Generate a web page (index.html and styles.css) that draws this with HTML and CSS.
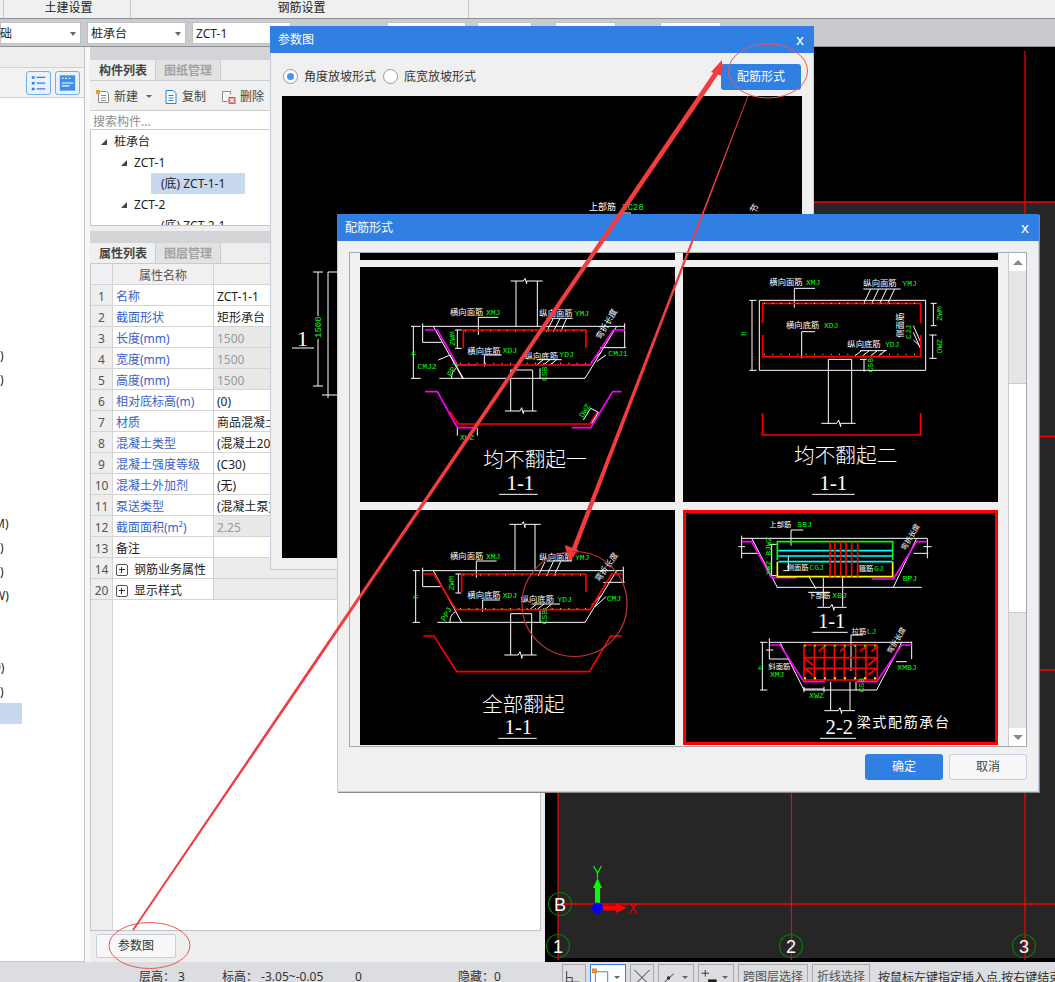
FILE: index.html
```html
<!DOCTYPE html>
<html lang="zh">
<head>
<meta charset="utf-8">
<title>参数图</title>
<link rel="stylesheet" href="styles.css">
</head>
<body>
<div class="app">
  <header class="menubar">
    <div class="menu-gap"></div>
    <div class="menu-item menu-a">土建设置</div>
    <div class="menu-item menu-b">钢筋设置</div>
  </header>
  <div class="selectbar">
    <div class="field f81"><span class="cut">基础</span><i class="caret"></i></div>
    <div class="field f99"><span>桩承台</span><i class="caret"></i></div>
    <div class="field f99"><span>ZCT-1</span></div>
    <div class="field f79 after96"></div>
    <div class="field f55"></div>
    <div class="field f61"></div>
    <div class="field f61"></div>
  </div>
  <main class="workspace">
    <aside class="left">
      <div class="left-head"></div>
      <div class="left-tools">
        <span class="viewbtn">
          <svg viewBox="0 0 24 24" width="24" height="24"><g class="ic-blue"><rect x="5" y="5" width="3" height="2.5"/><rect x="5" y="11" width="3" height="2.5"/><rect x="5" y="17" width="3" height="2.5"/><path d="M10 6.200h9M10 12.200h9M10 18.200h9"/></g></svg>
        </span>
        <span class="viewbtn">
          <svg viewBox="0 0 24 24" width="24" height="24"><rect x="4" y="4" width="16" height="16" class="ic-fill"/><path class="ic-white" d="M6 7h2M9.500 7h2M13 7h2M6 12h12M6 15h8"/></svg>
        </span>
      </div>
      <div class="left-list">
        <div class="lrow"></div><div class="lrow"></div><div class="lrow"></div><div class="lrow"></div><div class="lrow"></div>
        <div class="lrow"></div><div class="lrow"></div><div class="lrow"></div><div class="lrow"></div><div class="lrow"></div>
        <div class="lrow">)</div><div class="lrow">)</div>
        <div class="lrow"></div><div class="lrow"></div><div class="lrow"></div><div class="lrow"></div><div class="lrow"></div>
        <div class="lrow cutm">M)</div><div class="lrow">)</div><div class="lrow">)</div><div class="lrow cutm">W)</div>
        <div class="lrow"></div><div class="lrow"></div>
        <div class="lrow">9)</div><div class="lrow">)</div>
        <div class="lrow lsel"></div>
      </div>
    </aside>
    <div class="split-a"></div>
    <section class="panel">
      <div class="panel-cap"></div>
      <div class="tabs">
        <div class="tab on">构件列表</div>
        <div class="tab">图纸管理</div>
      </div>
      <div class="tools">
        <span class="tool">
          <svg viewBox="0 0 16 16" width="16" height="16"><path class="ic-doc" d="M3.500 2.500h8l2 2v9h-10z M6 6.500h5M6 9h5M6 11.500h5"/><rect x="1" y="1" width="4" height="4" class="ic-star"/></svg>
          新建<i class="caret small"></i>
        </span>
        <span class="tool">
          <svg viewBox="0 0 16 16" width="16" height="16"><path class="ic-copy" d="M3 1.500h7l3 3v10h-10z M5.500 6.500h5M5.500 9h5M5.500 11.500h5"/></svg>
          复制
        </span>
        <span class="tool tool-del">
          <svg viewBox="0 0 16 16" width="16" height="16"><path class="ic-doc" d="M1.500 2.500h8v3M1.500 2.500v10h5"/><rect x="7.500" y="8" width="7" height="7" class="ic-del"/><path class="ic-white" d="M9 9.500l4 4M13 9.500l-4 4"/></svg>
          删除
        </span>
      </div>
      <div class="search">搜索构件...</div>
      <div class="tree">
        <div class="node"><i class="tri"></i>桩承台</div>
        <div class="node lv1"><i class="tri"></i>ZCT-1</div>
        <div class="node lv2 sel">(底) ZCT-1-1</div>
        <div class="node lv1"><i class="tri"></i>ZCT-2</div>
        <div class="node lv2">(底) ZCT-2-1</div>
      </div>
      <div class="panel-gap"></div>
      <div class="tabs">
        <div class="tab on">属性列表</div>
        <div class="tab">图层管理</div>
      </div>
      <div class="props">
        <div class="pr head"><span class="no"></span><span class="nm">属性名称</span><span class="val"></span></div>
        <div class="pr"><span class="no">1</span><span class="nm link">名称</span><span class="val">ZCT-1-1</span></div>
        <div class="pr"><span class="no">2</span><span class="nm link">截面形状</span><span class="val">矩形承台</span></div>
        <div class="pr"><span class="no">3</span><span class="nm link">长度(mm)</span><span class="val ro">1500</span></div>
        <div class="pr"><span class="no">4</span><span class="nm link">宽度(mm)</span><span class="val ro">1500</span></div>
        <div class="pr"><span class="no">5</span><span class="nm link">高度(mm)</span><span class="val ro">1500</span></div>
        <div class="pr"><span class="no">6</span><span class="nm link">相对底标高(m)</span><span class="val">(0)</span></div>
        <div class="pr"><span class="no">7</span><span class="nm link">材质</span><span class="val">商品混凝土</span></div>
        <div class="pr"><span class="no">8</span><span class="nm link">混凝土类型</span><span class="val">(混凝土20石)</span></div>
        <div class="pr"><span class="no">9</span><span class="nm link">混凝土强度等级</span><span class="val">(C30)</span></div>
        <div class="pr"><span class="no">10</span><span class="nm link">混凝土外加剂</span><span class="val">(无)</span></div>
        <div class="pr"><span class="no">11</span><span class="nm link">泵送类型</span><span class="val">(混凝土泵)</span></div>
        <div class="pr"><span class="no">12</span><span class="nm link">截面面积(m²)</span><span class="val ro">2.25</span></div>
        <div class="pr"><span class="no">13</span><span class="nm">备注</span><span class="val"></span></div>
        <div class="pr"><span class="no">14</span><span class="nm"><i class="plus"></i>钢筋业务属性</span><span class="val group"></span></div>
        <div class="pr"><span class="no">20</span><span class="nm"><i class="plus"></i>显示样式</span><span class="val group"></span></div>
        <div class="pfill"><span class="no"></span><span class="pblank"></span></div>
      </div>
      <div class="panel-foot"><button class="btn-param">参数图</button></div>
    </section>
    <div class="split-b"></div>
    <div class="canvas">
      <svg class="cad-bg" viewBox="545 47 510 915" width="510" height="915">
        <rect x="558" y="202" width="497" height="756" class="dark"/>
        <g class="gridline">
          <path class="gv" d="M558 202V960M791.500 202V960M1025 51V960"/>
          <path class="gh" d="M558 202H1055M558 436.500H1055M558 670H1055M558 904H1055"/>
        </g>
        <g class="axis-ring">
          <circle cx="560" cy="904" r="11.500"/>
          <circle cx="558" cy="946" r="11.500"/>
          <circle cx="791" cy="946" r="11.500"/>
          <circle cx="1024" cy="946" r="11.500"/>
        </g>
        <text x="560" y="911" class="axis-t">B</text>
        <text x="558" y="953" class="axis-t">1</text>
        <text x="791" y="953" class="axis-t">2</text>
        <text x="1024" y="953" class="axis-t">3</text>
        <path class="ax-g" d="M595 903V888H593L597.500 878L602 888H600V903Z"/>
        <path class="ax-gl" d="M593.500 866L597.500 873L601.500 866M597.500 873V878"/>
        <path class="ax-r" d="M601 905.500H616V903L627 908L616 913V910.500H601Z"/>
        <path class="ax-rl" d="M630 903L637 913M637 903L630 913"/>
        <circle cx="597.500" cy="908" r="5.500" class="ax-b"/>
      </svg>
    </div>
  </main>
  <footer class="status">
    <div class="stat s-a">层高：&nbsp;3</div>
    <div class="stat s-b">标高：&nbsp;-3.05~-0.05</div>
    <div class="stat s-c">0</div>
    <div class="stat s-d">隐藏：0</div>
    <div class="sb">
      <span class="sbtn w24"><svg viewBox="0 0 24 20" width="22" height="19"><path class="ic-dark" d="M4 3V15H18M4 10H10V15"/></svg></span>
      <span class="sbtn w36 active"><svg viewBox="0 0 22 20" width="22" height="19"><path class="ic-blue2" d="M4 4H17V19M4 4V19"/><rect x="1" y="1" width="4" height="4" class="ic-orange"/></svg><i class="caret small"></i></span>
      <span class="sbtn w24"><svg viewBox="0 0 22 20" width="22" height="19"><path class="ic-dark" d="M3 2L19 18M19 2L3 18"/></svg></span>
      <span class="sbtn w36"><svg viewBox="0 0 22 20" width="22" height="19"><path class="ic-dark" d="M2 17H18M3 17L15 6"/><rect x="8" y="9" width="3" height="3"/></svg><i class="caret small"></i></span>
      <span class="sbtn w36"><svg viewBox="0 0 22 20" width="22" height="19"><path class="ic-dark" d="M6 2V9M2 5.500H10"/><rect x="9" y="12" width="9" height="5"/></svg><i class="caret small"></i></span>
      <span class="sbtn txt">跨图层选择</span>
      <span class="sbtn txt">折线选择</span>
      <span class="hint">按鼠标左键指定插入点,按右键结束</span>
    </div>
  </footer>
</div>

<div class="win win-param">
  <div class="win-title"><span>参数图</span><span class="win-x">x</span></div>
  <div class="param-tools">
    <span class="radio on"></span><span class="rlabel">角度放坡形式</span>
    <span class="radio"></span><span class="rlabel">底宽放坡形式</span>
    <button class="btn-primary btn-form">配筋形式</button>
  </div>
  <div class="param-img">
    <svg viewBox="282 96 520 462" width="520" height="462">
      <path class="w1" d="M318 272V316M318 339V386M313 272H323M313 386H323M328 386V272H600M322 395H340M328 386V398"/>
      <text x="308" y="346" text-anchor="end" class="t-white-s">1</text>
      <path class="w1" d="M292 348H314"/>
      <text class="g9" x="321" y="338" transform="rotate(-90 321 338)">1500</text>
      <text class="t9" x="589" y="210">上部筋</text>
      <text class="g9" x="622" y="210">XC28</text>
      <path class="w1" d="M620 213H631"/>
      <text class="t9" x="755" y="214" transform="rotate(-60 755 214)">节</text>
    </svg>
  </div>
</div>

<div class="win win-form">
  <div class="win-title"><span>配筋形式</span><span class="win-x">x</span></div>
  <div class="form-body">
    <div class="list-frame">
      <div class="list-view">
        <div class="cell-strip"><span></span><span></span></div>
        <div class="cells">
          <div class="cell">
            <svg viewBox="30 36 945 705" width="315" height="235">
              <g class="cw">
                <path d="M482 78H520L525 70L530 86V78H578M498 78V214M562 78V214M218 214H824M250 214L338 370M268 370H705M705 370L800 214"/>
                <path d="M190 214V370M183 214H212M183 370H212M218 205V262M218 262H275M824 205V278M750 278H828M322 225V280M315 225H335M315 280H335"/>
                <path d="M385 240V187M385 187H445M590 230L610 190M610 230L630 190M632 230L650 190M590 190H668M403 335V300M403 300H455M560 330L580 314M580 330L600 314M600 330L620 314M560 314H635"/>
                <path d="M465 468H510L515 458L520 476V468H560M482 345H548M482 345V468M548 345V468M570 340V372M305 370A35 35 0 0 1 318 340M300 300L340 370M265 315L300 300M725 320L755 290M740 320L768 300"/>
              </g>
              <path class="cm" d="M225 225H262L322 330H380M665 330H720L790 225H825"/>
              <path class="cr" d="M340 278V225H708V278M322 330H720"/>
              <path class="cd" d="M345 228H705M330 325H720"/>
              <path class="cm" d="M225 410H262L322 518H380M665 518H722L788 410H815"/>
              <path class="cr" d="M300 470L325 507H720L742 470"/>
              <path class="cw" d="M322 520V542M382 520V542M700 495L722 460L745 472L725 505"/>
              <text class="lt" x="300" y="180">横向面筋</text><text class="lg" x="408" y="180">XMJ</text>
              <text class="lt" x="568" y="182">纵向面筋</text><text class="lg" x="674" y="182">YMJ</text>
              <text class="lt" x="352" y="296">横向底筋</text><text class="lg" x="458" y="294">XDJ</text>
              <text class="lt" x="524" y="312">纵向底筋</text><text class="lg" x="628" y="306">YDJ</text>
              <text class="lg" x="775" y="304">CMJ1</text>
              <text class="lg" x="202" y="341">CMJ2</text>
              <text class="lg" x="198" y="302" transform="rotate(-90 198 302)">h</text>
              <text class="lg" x="315" y="272" transform="rotate(-90 315 272)">ZWM</text>
              <text class="lg" x="592" y="378" transform="rotate(-90 592 378)">CSB</text>
              <text class="lg" x="304" y="366" transform="rotate(-60 304 366)">PPJ</text>
              <text class="lg" x="700" y="490" transform="rotate(-60 700 490)">DWZ</text>
              <text class="lg" x="330" y="556">XWZ</text>
              <text class="lt" x="752" y="255" transform="rotate(-60 752 255)">弯折长度</text>
              <text class="big" x="400" y="636">均不翻起一</text>
              <text class="num" x="511" y="706">1-1</text>
              <path class="cw" d="M447 718H563"/>
            </svg>
          </div>
          <div class="cell">
            <svg viewBox="9 36 945 705" width="315" height="235">
              <g class="cw">
                <path d="M238 136H737V346H238ZM445 505V313H515V505M424 505H470L476 495L482 515V505H527M216 136V346M208 136H230M208 346H230"/>
                <path d="M343 158V100H405M365 310V230H405M550 102H662M550 148L572 102M574 148L596 102M598 148L620 102M622 148L644 102M525 302L545 287M548 302L568 287M572 302L592 287M596 302L616 287M540 287H620"/>
                <path d="M760 145V212M752 145H770M752 212H770M758 240V310M748 240H770M748 310H770M552 313V350M540 313H560M700 212L722 262M700 232L722 282M700 255L722 275"/>
              </g>
              <path class="cr" d="M248 205V145H722V205M248 240V305H722V240M248 475V540H722V475"/>
              <path class="cd" d="M252 145H720M252 298H720"/>
              <text class="lt" x="268" y="90">横向面筋</text><text class="lg" x="378" y="90">XMJ</text>
              <text class="lt" x="550" y="92">纵向面筋</text><text class="lg" x="667" y="92">YMJ</text>
              <text class="lt" x="318" y="218">横向底筋</text><text class="lg" x="432" y="218">XDJ</text>
              <text class="lt" x="502" y="275">纵向底筋</text><text class="lg" x="615" y="275">YDJ</text>
              <text class="lg" x="198" y="243" transform="rotate(-90 198 243)">h</text>
              <text class="lg" x="786" y="197" transform="rotate(-90 786 197)">ZWM</text>
              <text class="lg" x="786" y="295" transform="rotate(-90 786 295)">DWZ</text>
              <text class="lg" x="578" y="352" transform="rotate(-90 578 352)">CSB</text>
              <text class="lg" x="692" y="252" transform="rotate(-90 692 252)">CJJ</text>
              <text class="lt" x="668" y="248" transform="rotate(-90 668 248)">侧面筋</text>
              <text class="big" x="342" y="625">均不翻起二</text>
              <text class="num" x="460" y="706">1-1</text>
              <path class="cw" d="M397 718H524"/>
            </svg>
          </div>
          <div class="cell">
            <svg viewBox="30 15 945 705" width="315" height="235">
              <g class="cw">
                <path d="M478 58H515L520 50L525 68V58H572M495 58V197M555 58V197M218 197H820M250 197L335 352M262 352H705M705 352L800 197"/>
                <path d="M197 197V352M188 197H210M188 352H210M218 188V245M218 245H272M820 185V232M760 232H824M325 207V264M316 207H334M316 264H334"/>
                <path d="M379 218V168H440M590 168H665M565 212L585 170M590 212L610 170M612 212L632 170M398 320V285H450M540 313L560 297M562 313L582 297M585 313L605 297M545 297H630"/>
                <path d="M482 326H545M482 326V450M545 326V450M463 450H505L510 440L516 460V450H560M570 316V354M300 352A35 35 0 0 1 316 320M725 300L755 270M735 305L768 275"/>
              </g>
              <path class="cr" d="M335 262V207H708V262M218 207H252L318 314H720L785 207H818M220 393H252L320 500H718L782 393H815"/>
              <path class="cd" d="M340 210H705M330 311H720"/>
              <text class="lt" x="300" y="162">横向面筋</text><text class="lg" x="408" y="162">XMJ</text>
              <text class="lt" x="568" y="165">纵向面筋</text><text class="lg" x="675" y="165">YMJ</text>
              <text class="lt" x="352" y="278">横向底筋</text><text class="lg" x="458" y="278">XDJ</text>
              <text class="lt" x="512" y="291">纵向底筋</text><text class="lg" x="622" y="291">YDJ</text>
              <text class="lg" x="770" y="288">CMJ</text>
              <text class="lg" x="203" y="282" transform="rotate(-90 203 282)">h</text>
              <text class="lg" x="312" y="256" transform="rotate(-90 312 256)">ZWM</text>
              <text class="lg" x="590" y="358" transform="rotate(-90 590 358)">CSB</text>
              <text class="lg" x="285" y="350" transform="rotate(-60 285 350)">PPJ</text>
              <text class="lt" x="748" y="232" transform="rotate(-55 748 232)">弯折长度</text>
              <text class="big" x="396" y="620">全部翻起</text>
              <text class="num" x="505" y="688">1-1</text>
              <path class="cw" d="M445 700H560"/>
            </svg>
          </div>
          <div class="cell picked">
            <svg viewBox="18 24 927 693" width="309" height="231">
              <g class="cw">
                <path d="M185 92V160M185 100H742M742 100V160M175 125H195M185 145H235M700 145H745M730 125H755M215 100L292 247M640 247L710 100M290 247H725M430 218V305M488 218V305M412 307H450L456 298L462 316V307H500"/>
                <path d="M333 122V75H370M310 197H325V150M385 212L408 252M385 262H450M275 118V212M268 118H290M268 212H290"/>
                <path d="M268 412H695M268 400V462M695 410V462M258 435H280M268 462H330M648 470H680M300 412L372 555M590 555L665 412M370 555H590M247 412V555M240 412H262M240 555H262M452 530V615M510 530V615M433 617H475L480 608L485 626V617H525M513 390H548M513 390V498"/>
                <path d="M372 552H432M372 545V562M432 545V562M528 530V556"/>
              </g>
              <path class="cm" d="M185 110H215L275 218H350M575 222H640L710 110H740"/>
              <path class="cg2" d="M292 165V110H638V165"/>
              <path class="cy" d="M292 170V215H638V170"/>
              <path class="cc" d="M295 137H638M295 153H638M295 170H638"/>
              <path class="cr" d="M450 110V215M465 110V215M482 110V215M498 110V215M515 110V215M533 110V215"/>
              <path class="cm" d="M270 420H300L372 530H435M530 530H590L665 420H695"/>
              <path class="cr" d="M372 420H592V525H372ZM403 420V525M433 420V525M463 420V525M493 420V525M527 420V525M558 420V525M372 458H592M372 490H592M415 440L432 425M480 440L497 425M540 440L557 425M575 440L592 425M375 460L398 480M375 490L398 510M565 480L590 460M565 510L590 490"/>
              <path class="cd2" d="M372 520H592"/>
              <path class="cd3" d="M372 422H592"/>
              <text class="ls" x="268" y="65">上部筋</text><text class="lg" x="352" y="65">SBJ</text>
              <text class="ls" x="320" y="195">侧面筋</text><text class="lg" x="388" y="195">CGJ</text>
              <text class="ls" x="536" y="197">箍筋</text><text class="lg" x="582" y="197">GJ</text>
              <text class="ls" x="385" y="280">下部筋</text><text class="lg" x="457" y="280">XBJ</text>
              <text class="lg" x="668" y="228">BPJ</text>
              <text class="lg" x="272" y="210" transform="rotate(-90 272 210)">XWZ BJWZ</text>
              <text class="ls" x="515" y="386">拉筋</text><text class="lg" x="560" y="386">LJ</text>
              <text class="ls" x="265" y="492">斜面筋</text><text class="lg" x="270" y="515">XMJ</text>
              <text class="lg" x="652" y="495">XMBJ</text>
              <text class="lg" x="388" y="579">XWZ</text>
              <text class="lg" x="552" y="562" transform="rotate(-90 552 562)">CSB</text>
              <text class="lg" x="250" y="495" transform="rotate(-90 250 495)">h</text>
              <text class="ls" x="676" y="138" transform="rotate(-60 676 138)">弯折长度</text>
              <text class="ls" x="634" y="448" transform="rotate(-60 634 448)">弯折长度</text>
              <text class="num" x="455" y="370">1-1</text>
              <path class="cw" d="M397 382H503"/>
              <text class="name" x="530" y="665">梁式配筋承台</text>
              <text class="num" x="478" y="688">2-2</text>
              <path class="cw" d="M420 700H528"/>
            </svg>
          </div>
        </div>
      </div>
      <div class="scroll">
        <span class="sc-btn"><i class="arr-up"></i></span>
        <span class="sc-track"></span>
        <span class="sc-thumb"></span>
        <span class="sc-track2"></span>
        <span class="sc-btn"><i class="arr-down"></i></span>
      </div>
    </div>
    <div class="form-actions">
      <button class="btn-primary btn-ok">确定</button>
      <button class="btn-cancel">取消</button>
    </div>
  </div>
</div>

<svg class="marks" viewBox="0 0 1055 982" width="1055" height="982">
  <polygon class="m-fill" points="132.300,929.500 133.800,930.500 724,66 720,63"/>
  <polygon class="m-fill" points="722,60 711,72 722,76"/>
  <polygon class="m-fill" points="747.600,96 748.400,96 573.500,557 569,555.500"/>
  <polygon class="m-fill" points="569.500,561 564.500,545 578.500,550"/>
  <ellipse class="m-ring" cx="149.500" cy="945.500" rx="40.500" ry="23"/>
  <ellipse class="m-ring" cx="768" cy="71" rx="39.500" ry="27"/>
  <circle class="m-ring dark-ring" cx="574.500" cy="604" r="52.500"/>
</svg>
</body>
</html>
```

FILE: styles.css
```css
* { box-sizing: border-box; }
html, body { margin: 0; padding: 0; }
body {
  width: 1055px;
  height: 982px;
  overflow: hidden;
  position: relative;
  background: #eee;
  font: 12px/1 "Noto Sans", "Noto Sans CJK SC", sans-serif;
  color: #222;
}
button { font: inherit; cursor: default; }
i { display: inline-block; font-style: normal; }

.app { display: flex; flex-direction: column; height: 982px; }

/* top menu */
.menubar {
  flex: 0 0 19px;
  display: flex;
  background: #eff1f1;
  border-bottom: 1px solid #8d8f92;
  font-size: 12px;
  line-height: 16px;
}
.menu-gap { width: 4px; border-right: 1px solid #c9cacb; }
.menu-item { text-align: center; border-right: 1px solid #c9cacb; }
.menu-a { width: 127px; padding-left: 3px; }
.menu-b { width: 338px; padding-left: 4px; }

.selectbar {
  flex: 0 0 28px;
  display: flex;
  align-items: flex-start;
  gap: 6px;
  padding-top: 3px;
  background: #c9cbce;
  border-bottom: 1px solid #8f9194;
}
.field {
  height: 22px;
  background: #fff;
  border: 1px solid #bfc1c4;
  display: flex;
  align-items: center;
  justify-content: space-between;
  padding: 2px 4px 0 3px;
  flex: none;
  line-height: 20px;
}
.f81 { width: 81px; }
.f99 { width: 99px; }
.f79 { width: 79px; margin-left: 90px; }
.f55 { width: 55px; margin-left: 5px; }
.f61 { width: 61px; margin-left: 17px; }
.f61:last-child { margin-left: 38px; }
.cut { margin-left: -16px; }
.caret {
  width: 0; height: 0;
  border: 3.5px solid transparent;
  border-top: 4px solid #666;
  border-bottom: 0;
}
.caret.small { border-width: 3px; border-top-width: 3px; border-bottom-width: 0; }

.workspace { flex: 1; display: flex; min-height: 0; }

/* left tree strip */
.left {
  width: 85px;
  flex: none;
  display: flex;
  flex-direction: column;
  background: #fff;
  border-right: 1px solid #c3c5c8;
  border-bottom: 1px solid #c3c5c8;
}
.left-head { height: 21px; flex: none; background: #eee; border-bottom: 1px solid #d0d2d5; }
.left-tools {
  height: 30px;
  flex: none;
  display: flex;
  justify-content: flex-end;
  align-items: center;
  gap: 4px;
  padding: 1px 4px 0 0;
  background: #f2f2f2;
  border-bottom: 1px solid #d0d2d5;
}
.viewbtn {
  width: 25px;
  height: 24px;
  border: 1px solid #6fb1ee;
  border-radius: 3px;
  background: #e8f2fd;
  display: flex;
  align-items: center;
  justify-content: center;
}
.left-list { padding-top: 6px; flex: 1; overflow: hidden; }
.lrow { height: 24px; line-height: 24px; white-space: nowrap; overflow: hidden; padding-left: 0; }
.cutm { text-indent: -6px; }
.lsel { width: 22px; height: 21px; margin-top: -1px; background: #c8d8ef; }
.left-list .lrow:nth-child(24) { text-indent: -6px; }

.split-a { width: 5px; flex: none; background: #f7f7f7; }
.split-b { width: 4px; flex: none; background: #eee; }

/* properties panel */
.panel {
  width: 451px;
  flex: none;
  display: flex;
  flex-direction: column;
  background: #eee;
}
.panel-cap { height: 13px; flex: none; background: #d3d4d8; }
.panel-gap { height: 17px; flex: none; background: #d3d4d8; border-top: 5px solid #eee; }
.tabs {
  height: 21px;
  flex: none;
  display: flex;
  padding-left: 1px;
  background: #eee;
  border-bottom: 1px solid #c9cbce;
}
.tab {
  width: 65px;
  line-height: 21px;
  text-align: center;
  font-weight: 700;
  color: #a2a2a2;
  background: #e2e2e2;
  border-right: 1px solid #ccc;
}
.tab.on { background: #f0f0f0; color: #444; }
.tools {
  height: 30px;
  flex: none;
  display: flex;
  align-items: center;
  gap: 11px;
  padding: 2px 0 0 5px;
  background: #f0f0f0;
  border-bottom: 1px solid #ccc;
  color: #444;
}
.tool { display: flex; align-items: center; gap: 3px; }
.tool .caret { margin-left: 5px; }
.tool-del { margin-left: 4px; }
.search {
  height: 19px;
  flex: none;
  line-height: 22px;
  padding-left: 3px;
  background: #fff;
  color: #8d8d8d;
  border-bottom: 1px solid #ccc;
  overflow: hidden;
}
.tree {
  height: 96px;
  flex: none;
  overflow: hidden;
  background: #fff;
  padding-top: 1px;
  border-bottom: 1px solid #c3c5c8;
  border-left: 1px solid #c3c5c8;
}
.node { height: 21px; line-height: 21px; padding-left: 10px; display: flex; align-items: center; white-space: nowrap; }
.node.lv1 { padding-left: 30px; }
.node.lv2 { margin-left: 60px; padding-left: 10px; width: 94px; }
.node.sel { background: #c8d8ef; }
.tri {
  width: 0; height: 0;
  margin-right: 7px;
  border-left: 6px solid transparent;
  border-bottom: 6px solid #444;
}

.props {
  flex: 1;
  min-height: 0;
  display: flex;
  flex-direction: column;
  background: #fff;
  overflow: hidden;
  border-left: 1px solid #c3c5c8;
  border-bottom: 1px solid #bfc1c4;
  border-right: 1px solid #bfc1c4;
}
.pr { height: 21px; flex: none; display: flex; border-bottom: 1px solid #d4d4d4; line-height: 24px; }
.pr .no, .pfill .no {
  width: 22px;
  flex: none;
  text-align: center;
  background: #eee;
  border-right: 1px solid #d4d4d4;
  color: #555;
}
.pr .nm { width: 101px; flex: none; padding: 4px 0 0 3px; border-right: 1px solid #d4d4d4; white-space: nowrap; overflow: hidden; display: flex; align-items: center; }
.pr .val { flex: 1; padding-left: 3px; white-space: nowrap; overflow: hidden; }
.pr.head { background: #f0f0f0; color: #555; }
.pr.head .no { background: #eef0f4; }
.pr.head .nm { justify-content: center; padding: 4px 0 0; background: #f0f0f0; }
.pr.head .val { background: #f0f0f0; }
.nm.link { color: #3a61c8; }
.val.ro { background: #e8e8e8; color: #999; }
.val.group { background: #ececec; }
.plus {
  width: 12px;
  height: 12px;
  margin-right: 6px;
  border: 1px solid #555;
  border-radius: 2px;
  position: relative;
}
.plus::before { content: ""; position: absolute; left: 2px; top: 4px; width: 6px; height: 2px; border-top: 1px solid #333; }
.plus::after { content: ""; position: absolute; left: 4px; top: 2px; height: 6px; width: 2px; border-left: 1px solid #333; }
.pfill { flex: 1; display: flex; }
.pblank { flex: 1; }
.panel-foot { height: 31px; flex: none; padding: 3px 0 0 6px; background: #eee; }
.btn-param {
  width: 80px;
  height: 24px;
  background: #f8f8f8;
  border: 1px solid #c7cfdf;
  border-radius: 2px;
  color: #333;
  padding: 0;
}

/* canvas */
.canvas { flex: 1; background: #000; overflow: hidden; }
.cad-bg { display: block; }
.dark { fill: #262626; }
.gridline path { stroke: #f00; fill: none; }
.gv { stroke-width: 1.200; }
.gh { stroke-width: 1.600; }
.axis-ring circle { fill: none; stroke: #0a7a0a; stroke-width: 1.200; }
.axis-t { fill: #fff; font: 18px "Liberation Sans", sans-serif; text-anchor: middle; }
.ax-g { fill: #0f0; }
.ax-gl { stroke: #0f0; fill: none; stroke-width: 1.200; }
.ax-r { fill: #f00; }
.ax-rl { stroke: #f00; fill: none; stroke-width: 1.200; }
.ax-b { fill: #00f; }

/* status */
.status {
  height: 20px;
  flex: none;
  position: relative;
  display: flex;
  align-items: flex-start;
  background: #dcdde0;
  color: #333;
  overflow: hidden;
}
.stat { flex: none; white-space: nowrap; padding-top: 9px; }
.s-a { margin-left: 139px; width: 83px; }
.s-b { width: 133px; }
.s-c { width: 103px; }
.s-d { width: 104px; }
.sb { display: flex; gap: 4px; align-items: flex-start; height: 20px; padding-top: 2px; white-space: nowrap; }
.sbtn {
  height: 24px;
  flex: none;
  display: flex;
  align-items: center;
  padding: 2px 2px 0;
  background: #dcdde0;
  border: 1px solid #a8a9ac;
  color: #555;
}
.sbtn.w24 { width: 24px; padding: 2px 0 0; }
.sbtn.w36 { width: 36px; padding: 2px 0 0; gap: 1px; }
.sbtn.active { background: #fff; border-color: #2f80e2; }
.sbtn.txt { padding: 2px 4px 0; width: auto; }
.hint { line-height: 28px; margin-left: 4px; color: #333; }

/* dialogs */
.win { position: absolute; background: #f0f0f0; border: 1px solid #c5ccd8; }
.win-param { left: 270px; top: 26px; width: 544px; height: 544px; }
.win-form { left: 337px; top: 214px; width: 702px; height: 578px; box-shadow: 1px 1px 0 #888; }
.win-title {
  height: 27px;
  margin: -1px -1px 0;
  display: flex;
  justify-content: space-between;
  align-items: center;
  padding: 0 10px 0 8px;
  background: #2f80e2;
  color: #fff;
}
.win-x { font-size: 15px; }
.param-tools { height: 43px; position: relative; display: flex; align-items: center; padding: 4px 0 0 12px; }
.radio {
  width: 15px; height: 15px;
  border-radius: 50%;
  border: 1px solid #999;
  background: #fff;
  position: relative;
  flex: none;
}
.radio.on::after {
  content: "";
  position: absolute;
  left: 3px; top: 3px;
  width: 7px; height: 7px;
  border-radius: 50%;
  background: #4a92f0;
}
.rlabel { margin: 0 7px 0 6px; color: #333; }
.btn-primary { background: #2f80e2; color: #fff; border: 0; border-radius: 3px; padding: 0; }
.btn-form { width: 80px; height: 26px; margin-left: auto; margin-right: 12px; }
.param-img { margin: 0 11px; height: 462px; background: #000; }
.param-img svg { display: block; }
.w1 { stroke: #fff; fill: none; stroke-width: 1; }
.t-white-s { fill: #fff; font: 22px "Liberation Serif", serif; }
.g9 { fill: #0f0; font: 9px "Liberation Mono", monospace; }
.t9 { fill: #fff; font: 9px "Noto Sans CJK SC", sans-serif; }

.form-body { padding: 11px 11px 0; }
.list-frame {
  height: 495px;
  display: flex;
  border: 1px solid #a7a9ac;
  background: #f0f0f0;
}
.list-view { flex: 1; padding: 0 10px; overflow: hidden; }
.cell-strip { display: flex; gap: 8px; height: 7px; margin-bottom: 7px; }
.cell-strip span { width: 315px; background: #000; }
.cells { display: grid; grid-template-columns: 315px 315px; gap: 8px; }
.cell { width: 315px; height: 235px; background: #000; }
.cell svg { display: block; }
.cell.picked { border: 3px solid #f00; }
.cw, .cw path { stroke: #fff; fill: none; stroke-width: 3; }
.cm { stroke: #f0f; fill: none; stroke-width: 5; }
.cr { stroke: #f00; fill: none; stroke-width: 5; }
.cg2 { stroke: #0f0; fill: none; stroke-width: 5; }
.cy { stroke: #ff0; fill: none; stroke-width: 5; }
.cc { stroke: #0ff; fill: none; stroke-width: 5; }
.cd { stroke: #ff0; fill: none; stroke-width: 3; stroke-dasharray: 3 22; }
.cd2 { stroke: #ff0; fill: none; stroke-width: 6; stroke-dasharray: 6 24; }
.cd3 { stroke: #0f0; fill: none; stroke-width: 6; stroke-dasharray: 6 24; }
.lt { fill: #fff; font: 25px "Noto Sans CJK SC", sans-serif; }
.ls { fill: #fff; font: 22px "Noto Sans CJK SC", sans-serif; }
.lg { fill: #0f0; font: 24px "Liberation Mono", monospace; }
.big { fill: #fff; font: 300 62px "Noto Sans CJK SC", sans-serif; }
.num { fill: #fff; font: 62px "Liberation Serif", serif; text-anchor: middle; }
.name { fill: #fff; font: 42px "Noto Sans CJK SC", sans-serif; letter-spacing: 5px; }

.scroll { width: 18px; flex: none; display: flex; flex-direction: column; background: #e6e6e6; border-left: 1px solid #ccc; }
.sc-btn { height: 18px; flex: none; background: #fff; display: flex; align-items: center; justify-content: center; }
.sc-track { height: 112px; flex: none; }
.sc-thumb { height: 230px; flex: none; background: #fff; border-top: 1px solid #ccc; border-bottom: 1px solid #ccc; }
.sc-track2 { flex: 1; }
.arr-up { width: 0; height: 0; border: 5px solid transparent; border-bottom: 5px solid #888; border-top: 0; }
.arr-down { width: 0; height: 0; border: 5px solid transparent; border-top: 5px solid #888; border-bottom: 0; }
.form-actions { display: flex; justify-content: flex-end; gap: 6px; padding-top: 7px; }
.btn-ok { width: 78px; height: 26px; }
.btn-cancel { width: 78px; height: 26px; background: #f7f7f7; border: 1px solid #c7cfdf; border-radius: 3px; color: #444; padding: 0; }

/* icons */
.ic-blue rect { fill: #2f80e2; }
.ic-blue path { stroke: #2f80e2; fill: none; stroke-width: 1.200; }
.ic-fill { fill: #3f8fe8; }
.ic-white { stroke: #fff; fill: none; stroke-width: 1.200; }
.ic-doc { stroke: #8a8a8a; fill: #fff; stroke-width: 1; }
.ic-copy { stroke: #2f80e2; fill: #fff; stroke-width: 1; }
.ic-star { fill: #f39a2d; }
.ic-del { fill: #d85a5a; }
.ic-dark { stroke: #333; fill: none; stroke-width: 1; }
.ic-blue2 { stroke: #2f80e2; fill: none; stroke-width: 1; }
.ic-orange { fill: #f39a2d; stroke: #c9761f; stroke-width: .8; }
.sbtn svg rect:not(.ic-orange) { fill: #222; }

/* hand-drawn annotations over the screenshot */
.marks { position: absolute; left: 0; top: 0; pointer-events: none; }
.m-fill { fill: #f23c40; }
.m-ring { fill: none; stroke: #f05558; stroke-width: 1; }
.dark-ring { stroke: #c03438; stroke-width: 1.200; }
```
